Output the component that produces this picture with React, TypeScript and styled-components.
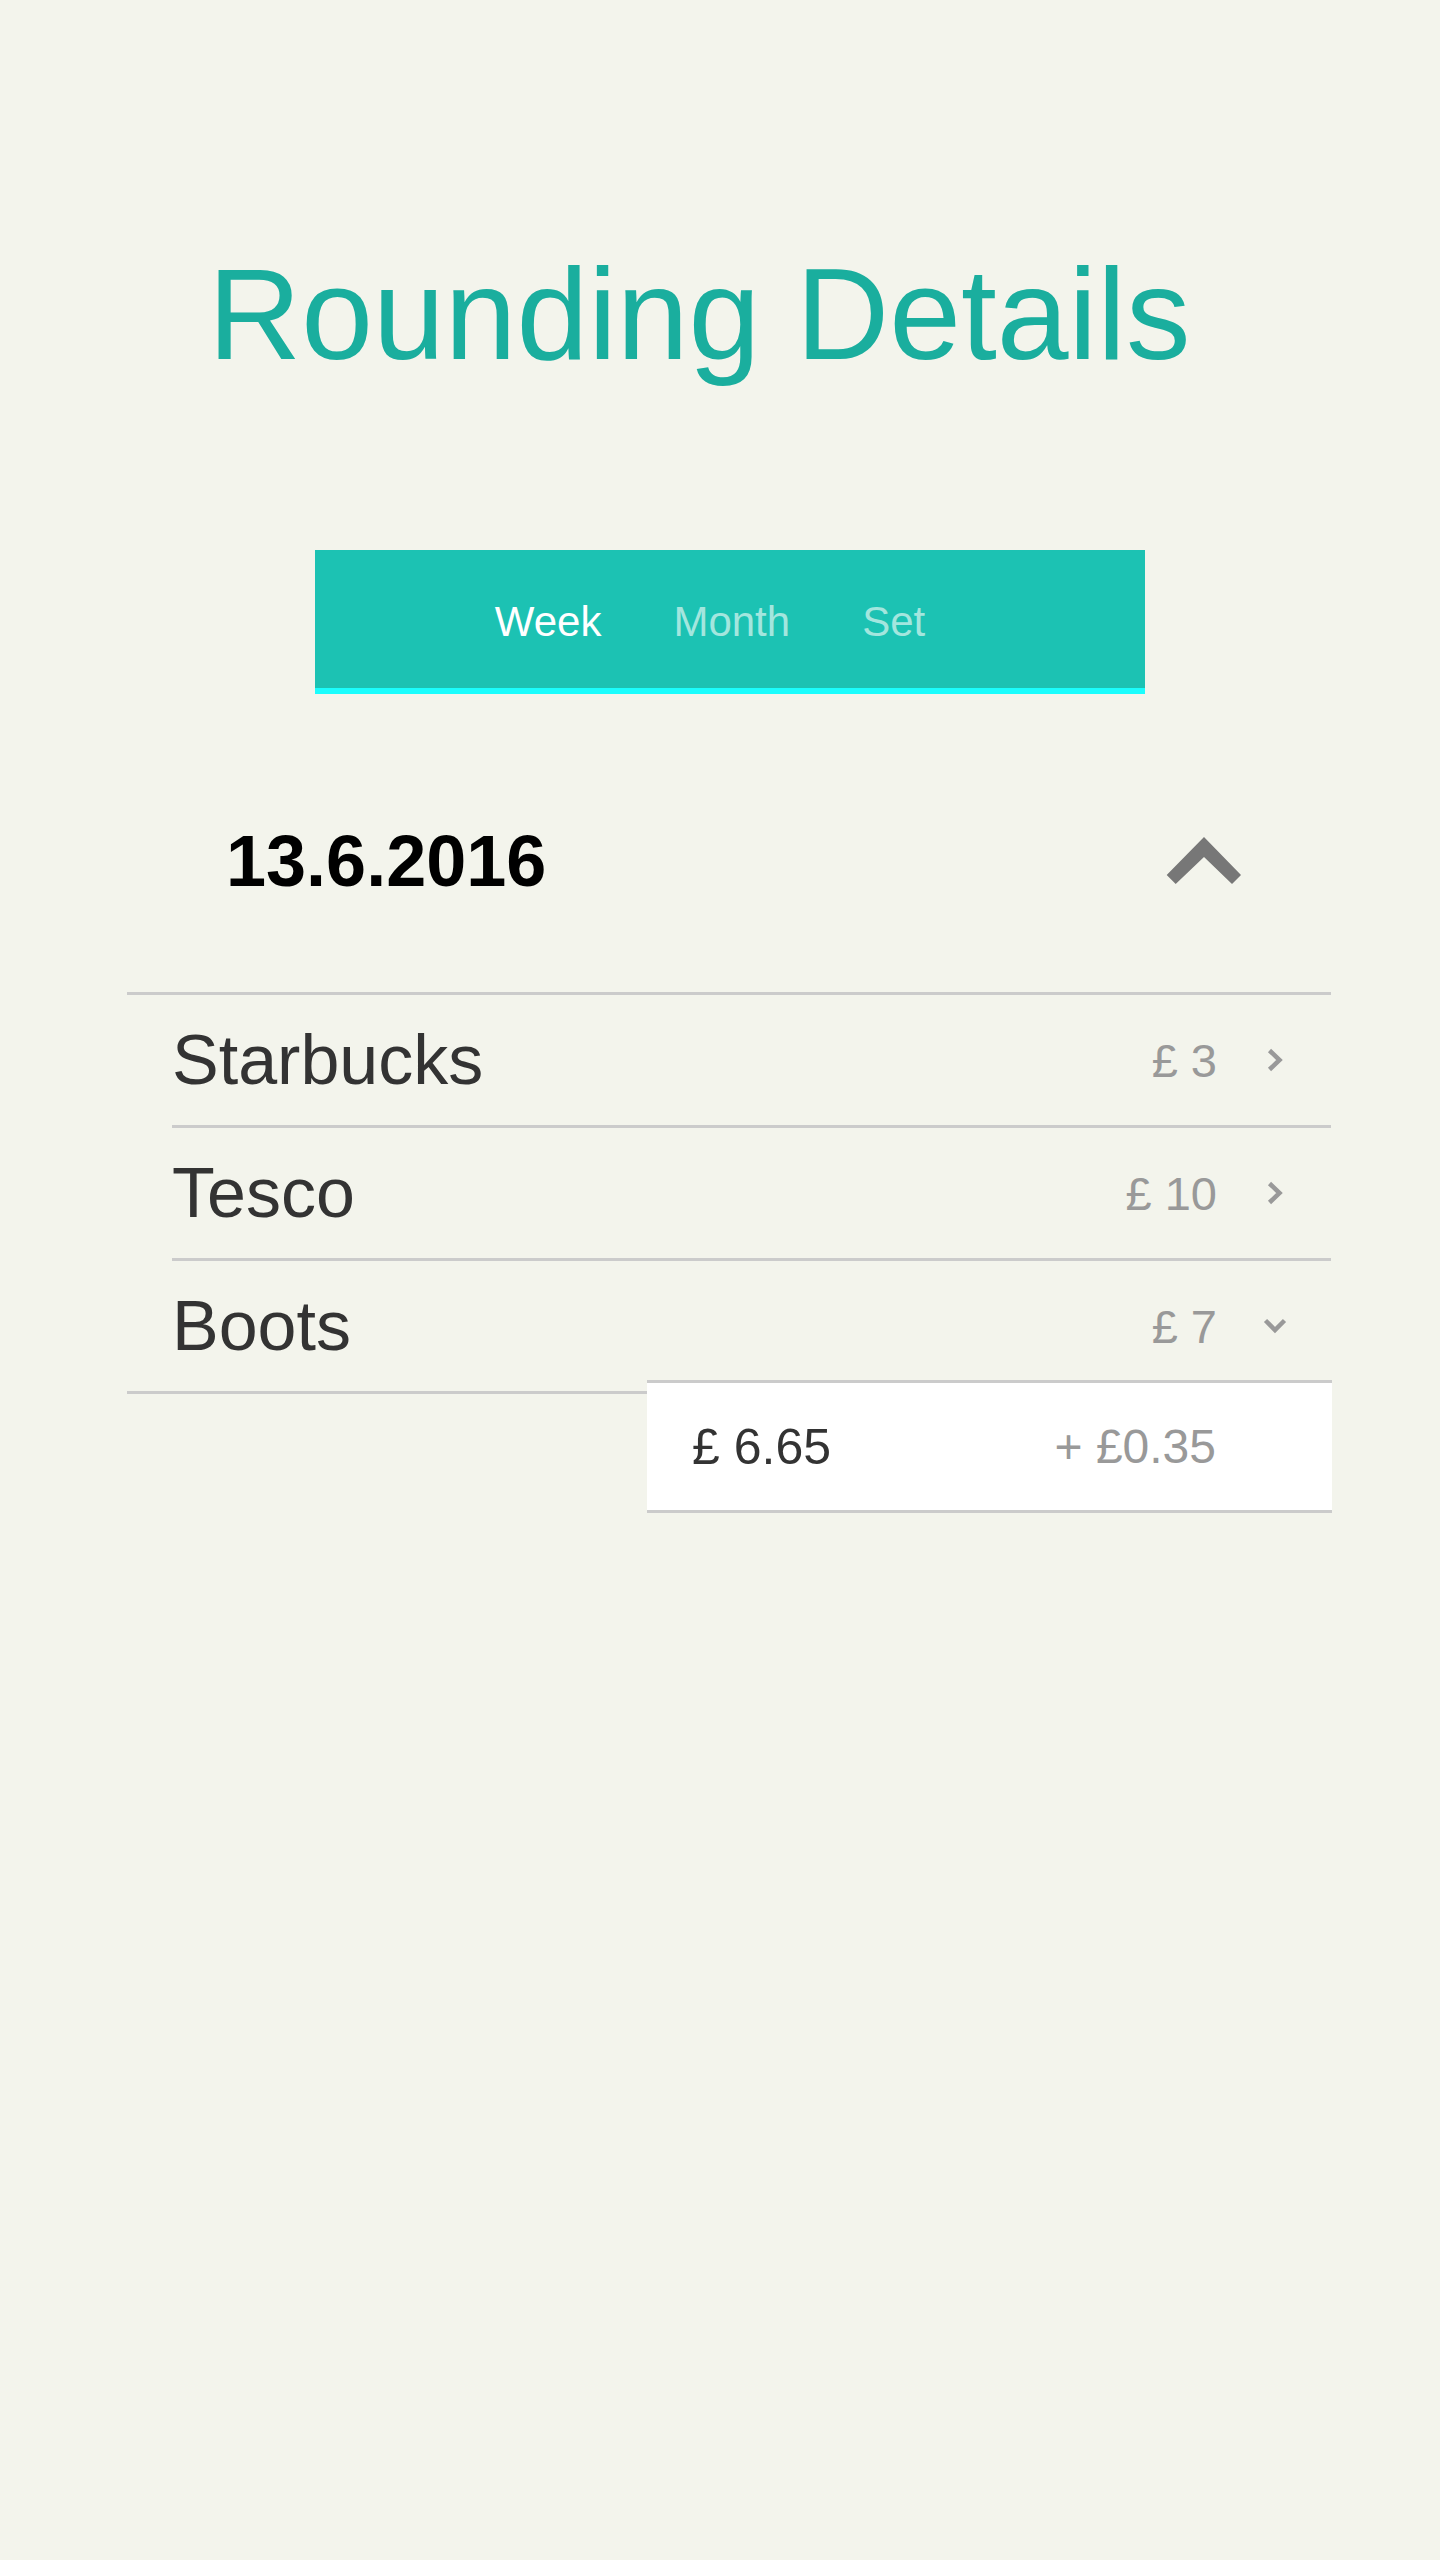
import React from "react";
import styled, { createGlobalStyle } from "styled-components";

const GlobalStyle = createGlobalStyle`
  html, body {
    margin: 0;
    padding: 0;
    background-color: #f3f4ec;
  }
  body {
    font-family: "Liberation Sans", Arial, sans-serif;
    min-height: 2560px;
  }
`;

const Page = styled.div`
  width: 1440px;
  padding-bottom: 200px;
`;

const Title = styled.h1`
  margin: 249px 0 0 208px;
  font-size: 129px;
  line-height: 130px;
  font-weight: normal;
  color: #1aae9e;
  white-space: nowrap;
`;

const TabBar = styled.nav`
  margin: 171px 0 0 315px;
  width: 830px;
  height: 144px;
  box-sizing: border-box;
  background-color: #1cc2b3;
  border-bottom: 6px solid #1bfdfd;
  display: flex;
  align-items: center;
  justify-content: center;
  gap: 72px;
  padding: 6px 40px 0 0;
`;

interface TabProps {
  active?: boolean;
}

const Tab = styled.span<TabProps>`
  font-size: 42px;
  line-height: 42px;
  color: ${(props) => (props.active ? "#ffffff" : "#a3e6de")};
  cursor: pointer;
`;

const DateHeader = styled.div`
  margin: 100px 0 64px 0;
  height: 134px;
  padding: 0 199px 0 226px;
  display: flex;
  align-items: center;
  justify-content: space-between;
`;

const DateText = styled.h2`
  margin: 0;
  font-size: 72px;
  line-height: 72px;
  font-weight: bold;
  color: #000;
`;

const List = styled.ul`
  list-style: none;
  margin: 0 0 0 127px;
  padding: 0;
  width: 1204px;
  border-top: 3px solid #cbcbcb;
  border-bottom: 3px solid #cbcbcb;
`;

const Row = styled.li`
  margin-left: 45px;
  height: 130px;
  display: flex;
  align-items: center;
  & + & {
    border-top: 3px solid #cbcbcb;
  }
`;

const Name = styled.span`
  flex: 1;
  font-size: 70px;
  line-height: 70px;
  color: #333;
`;

const Price = styled.span`
  font-size: 47px;
  line-height: 47px;
  color: #999;
`;

const IconBox = styled.span`
  width: 24px;
  margin: 0 44px 0 46px;
  display: flex;
  align-items: center;
  justify-content: center;
`;

const Detail = styled.div`
  margin: -14px 0 0 647px;
  width: 524px;
  height: 127px;
  background-color: #fff;
  border-top: 3px solid #cbcbcb;
  border-bottom: 3px solid #cbcbcb;
  display: flex;
  align-items: center;
  justify-content: space-between;
  padding: 0 116px 0 45px;
`;

interface AmountProps {
  muted?: boolean;
}

const Amount = styled.span<AmountProps>`
  font-size: ${(props) => (props.muted ? "48px" : "50px")};
  line-height: 50px;
  color: ${(props) => (props.muted ? "#999" : "#333")};
`;

const ChevronUp = () => (
  <svg width="75" height="48" viewBox="0 0 75 48">
    <polygon points="0.7,38 38,0 75,38 66,47 38,20 9.7,47" fill="#777" />
  </svg>
);

const ChevronRight = () => (
  <svg width="16" height="24" viewBox="0 0 16 24">
    <polyline
      points="2.5,2.5 12.5,12 2.5,21.5"
      fill="none"
      stroke="#999"
      strokeWidth="4.5"
    />
  </svg>
);

const ChevronDown = () => (
  <svg width="24" height="16" viewBox="0 0 24 16">
    <polyline
      points="2.5,2.5 12,12 21.5,2.5"
      fill="none"
      stroke="#999"
      strokeWidth="4.5"
    />
  </svg>
);

interface Rounding {
  name: string;
  amount: string;
  open?: boolean;
}

const items: Rounding[] = [
  { name: "Starbucks", amount: "£ 3" },
  { name: "Tesco", amount: "£ 10" },
  { name: "Boots", amount: "£ 7", open: true },
];

const App: React.FC = () => {
  return (
    <>
      <GlobalStyle />
      <Page>
        <Title>Rounding Details</Title>
        <TabBar>
          <Tab active>Week</Tab>
          <Tab>Month</Tab>
          <Tab>Set</Tab>
        </TabBar>
        <DateHeader>
          <DateText>13.6.2016</DateText>
          <ChevronUp />
        </DateHeader>
        <List>
          {items.map((item) => (
            <Row key={item.name}>
              <Name>{item.name}</Name>
              <Price>{item.amount}</Price>
              <IconBox>{item.open ? <ChevronDown /> : <ChevronRight />}</IconBox>
            </Row>
          ))}
        </List>
        <Detail>
          <Amount>£ 6.65</Amount>
          <Amount muted>+ £0.35</Amount>
        </Detail>
      </Page>
    </>
  );
};

export default App;
